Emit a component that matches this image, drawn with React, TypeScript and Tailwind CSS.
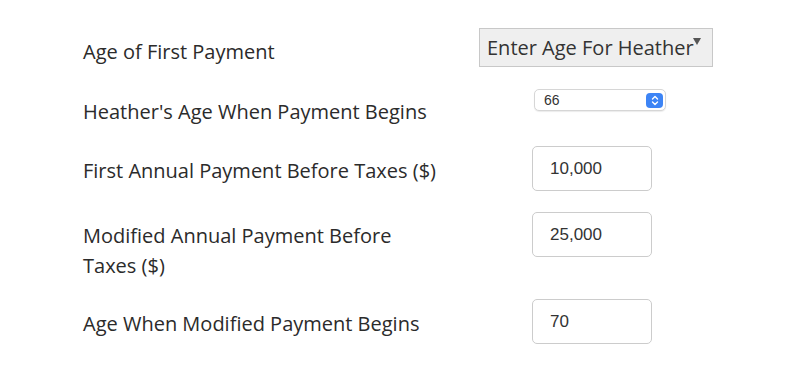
import React from "react";

const labelCls =
  "w-[396px] shrink-0 text-[20px] leading-[30px] text-[#2b2b2b]";
const inputCls =
  "ml-[53px] w-[120px] h-[45px] rounded-[5px] border border-[#ccc] bg-white pl-[17px] text-[17px] text-[#333] outline-none";

function NumberField({ value }: { value: string }) {
  return (
    <input
      className={inputCls}
      style={{ fontFamily: '"Liberation Sans", Arial, sans-serif' }}
      defaultValue={value}
    />
  );
}

export default function App() {
  return (
    <div
      className="w-[800px] h-[377px] bg-white pt-[28px] pl-[83px]"
      style={{ fontFamily: '"Open Sans", sans-serif' }}
    >
      {/* Age of first payment */}
      <div className="flex items-start h-[61px]">
        <div className={`${labelCls} mt-[9px]`}>Age of First Payment</div>
        <button className="relative w-[234px] h-[39px] border border-[#c8c8c8] bg-[#efefef] pl-[7px] text-left text-[20px] leading-[37px] text-[#333] whitespace-nowrap">
          Enter Age For Heather
          <span className="absolute left-[213px] top-[9px] w-0 h-0 border-l-[4px] border-r-[4px] border-t-[7px] border-l-transparent border-r-transparent border-t-[#555]" />
        </button>
      </div>

      {/* Heather's age */}
      <div className="flex items-start h-[57px]">
        <div className={`${labelCls} mt-[8px]`}>Heather's Age When Payment Begins</div>
        <div
          className="ml-[55px] flex items-center justify-between w-[132px] h-[22px] rounded-[5px] border border-[#d6d6d6] bg-white pl-[9px] pr-[2px] text-[14px] text-[#333] shadow-[0_1px_1px_rgba(0,0,0,0.08)]"
          style={{ fontFamily: '"Liberation Sans", Arial, sans-serif' }}
        >
          <span>66</span>
          <span className="flex items-center justify-center w-[17px] h-[15px] rounded-[4px] bg-[#3d84f5]">
            <svg width="8" height="11" viewBox="0 0 8 11" fill="none">
              <path d="M1.5 4L4 1.5L6.5 4" stroke="white" strokeWidth="1.4" strokeLinecap="round" strokeLinejoin="round" />
              <path d="M1.5 7L4 9.5L6.5 7" stroke="white" strokeWidth="1.4" strokeLinecap="round" strokeLinejoin="round" />
            </svg>
          </span>
        </div>
      </div>

      {/* First annual payment */}
      <div className="flex items-start h-[66px]">
        <div className={`${labelCls} mt-[10px]`}>First Annual Payment Before Taxes ($)</div>
        <NumberField value="10,000" />
      </div>

      {/* Modified annual payment */}
      <div className="flex items-start h-[87px]">
        <div className={`${labelCls} mt-[9px]`}>
          Modified Annual Payment Before
          <br />
          Taxes ($)
        </div>
        <NumberField value="25,000" />
      </div>

      {/* Age when modified */}
      <div className="flex items-start">
        <div className={`${labelCls} mt-[10px]`}>Age When Modified Payment Begins</div>
        <NumberField value="70" />
      </div>
    </div>
  );
}
